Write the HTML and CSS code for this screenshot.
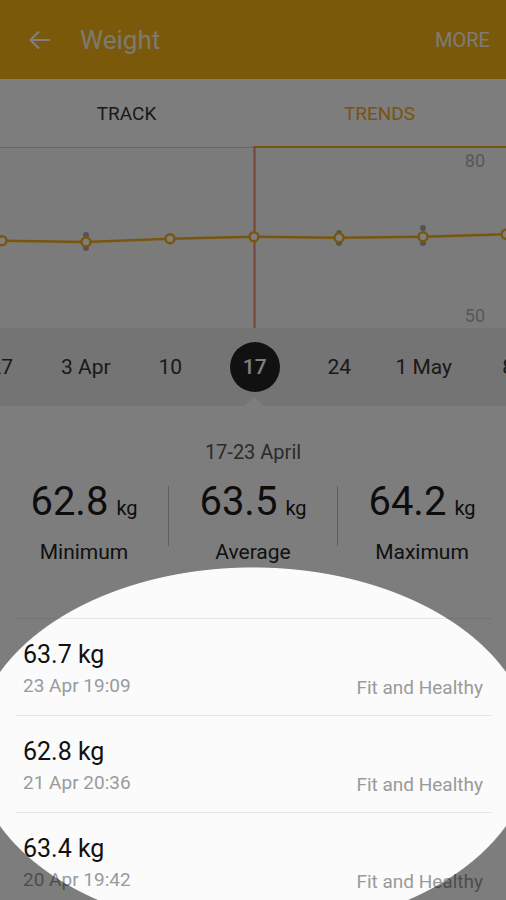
FILE: index.html
```html
<!DOCTYPE html>
<html lang="en">
  <head>
    <meta charset="UTF-8" />
    <meta name="viewport" content="width=device-width, initial-scale=1.0" />
    <title>Weight</title>
    <link rel="stylesheet" href="styles.css">
  </head>
  <body>
    <header class="appbar">
      <svg class="back" width="24" height="24" viewBox="0 0 24 24">
        <path d="M22 12H3M11 3.5L2.5 12 11 20.5" fill="none" stroke="#fff" stroke-width="2.2" />
      </svg>
      <h1>Weight</h1>
      <span class="more">MORE</span>
    </header>

    <nav class="tabs">
      <span class="tab">TRACK</span>
      <span class="tab active">TRENDS</span>
    </nav>

    <section class="chart">
      <svg width="506" height="182" viewBox="0 0 506 182">
        <line x1="0" y1="1.5" x2="254" y2="1.5" stroke="#cfcfcf" stroke-width="1" />
        <line x1="254" y1="1" x2="506" y2="1" stroke="#f2ad1d" stroke-width="2" />
        <line x1="254.5" y1="0" x2="254.5" y2="182" stroke="#ec8a74" stroke-width="2" />
        <text x="485" y="21" text-anchor="end" class="axis">80</text>
        <text x="485" y="176" text-anchor="end" class="axis">50</text>
        <g fill="#a8a8a8">
          <circle cx="86" cy="89" r="3" />
          <circle cx="86" cy="102" r="3" />
          <circle cx="339" cy="87" r="3" />
          <circle cx="339" cy="97" r="3" />
          <circle cx="423" cy="82" r="3" />
          <circle cx="423" cy="97" r="3" />
        </g>
        <polyline points="2,94.7 86,96 170,92.7 254,90.7 339,91.7 423,90.7 506,88.3"
          fill="none" stroke="#f2ad1d" stroke-width="2.5" />
        <g fill="#fff" stroke="#f2ad1d" stroke-width="2.5">
          <circle cx="2" cy="94.7" r="4.5" />
          <circle cx="86" cy="96" r="4.5" />
          <circle cx="170" cy="92.7" r="4.5" />
          <circle cx="254" cy="90.7" r="4.5" />
          <circle cx="339" cy="91.7" r="4.5" />
          <circle cx="423" cy="90.7" r="4.5" />
          <circle cx="506" cy="88.3" r="4.5" />
        </g>
      </svg>
    </section>

    <div class="weeks">
      <span class="week">27</span>
      <span class="week">3 Apr</span>
      <span class="week">10</span>
      <span class="week current"><b>17</b></span>
      <span class="week">24</span>
      <span class="week">1 May</span>
      <span class="week">8</span>
    </div>

    <section class="summary">
      <div class="range">17-23 April</div>
      <div class="stats">
        <div class="stat">
          <div class="value">62.8<small>kg</small></div>
          <div class="label">Minimum</div>
        </div>
        <div class="divider"></div>
        <div class="stat">
          <div class="value">63.5<small>kg</small></div>
          <div class="label">Average</div>
        </div>
        <div class="divider"></div>
        <div class="stat">
          <div class="value">64.2<small>kg</small></div>
          <div class="label">Maximum</div>
        </div>
      </div>
    </section>

    <ul class="entries">
      <li class="entry">
        <div class="weight">63.7 kg</div>
        <div class="meta"><span class="date">23 Apr 19:09</span><span class="status">Fit and Healthy</span></div>
      </li>
      <li class="entry">
        <div class="weight">62.8 kg</div>
        <div class="meta"><span class="date">21 Apr 20:36</span><span class="status">Fit and Healthy</span></div>
      </li>
      <li class="entry">
        <div class="weight">63.4 kg</div>
        <div class="meta"><span class="date">20 Apr 19:42</span><span class="status">Fit and Healthy</span></div>
      </li>
    </ul>

    <div class="spotlight"></div>
  </body>
</html>
```

FILE: styles.css
```css
body {
  margin: 0;
  width: 506px;
  height: 900px;
  overflow: hidden;
  font-family: Roboto, "Noto Sans", Arial, sans-serif;
  background-color: #fbfbfb;
  color: #222;
}

.appbar {
  height: 79px;
  background-color: #f4b316;
  display: flex;
  align-items: center;
  padding: 0 16px 0 28px;
  color: #fff;
}

.back {
  margin-right: 28px;
}

.appbar h1 {
  margin: 0;
  font-size: 26px;
  font-weight: 400;
  flex: 1;
  opacity: 0.85;
}

.more {
  font-size: 20px;
  opacity: 0.9;
}

.tabs {
  height: 67px;
  display: grid;
  grid-template-columns: 1fr 1fr;
  align-items: center;
  background-color: #fafafa;
}

.tab {
  text-align: center;
  font-size: 19px;
  color: #333;
  padding-top: 2px;
}

.tab.active {
  color: #f0a81a;
}

.chart {
  height: 182px;
  background-color: #f7f7f7;
}

.chart svg {
  display: block;
}

.axis {
  font-family: Roboto, Arial, sans-serif;
  font-size: 18px;
  fill: #b0b0b0;
}

.weeks {
  position: relative;
  height: 78px;
  background-color: #e9e9e9;
  display: flex;
  align-items: center;
  margin-left: -41px;
}

.weeks::after {
  content: "";
  position: absolute;
  left: 285px;
  bottom: 0;
  border-left: 10px solid transparent;
  border-right: 10px solid transparent;
  border-bottom: 9px solid #fbfbfb;
}

.week {
  flex: 0 0 84.5px;
  text-align: center;
  font-size: 21px;
  color: #333;
}

.week b {
  display: inline-flex;
  width: 50px;
  height: 50px;
  border-radius: 50%;
  background-color: #222;
  color: #fff;
  font-weight: 500;
  align-items: center;
  justify-content: center;
}

.summary {
  padding-top: 34px;
  text-align: center;
}

.range {
  font-size: 20px;
  line-height: 24px;
  color: #555;
}

.stats {
  display: grid;
  grid-template-columns: 1fr 1px 1fr 1px 1fr;
  margin-top: 14px;
}

.divider {
  height: 60px;
  margin-top: 8px;
  background-color: #bdbdbd;
}

.value {
  font-size: 40px;
  line-height: 48px;
  color: #1a1a1a;
}

.value small {
  font-size: 20px;
  margin-left: 8px;
}

.label {
  margin-top: 8px;
  font-size: 21px;
  line-height: 24px;
  color: #222;
}

.entries {
  list-style: none;
  margin: 54px 14px 0 16px;
  padding: 0;
}

.entry {
  border-top: 1px solid #e6e6e6;
  height: 97px;
  padding: 22px 9px 0 7px;
  box-sizing: border-box;
}

.weight {
  font-size: 25px;
  line-height: 28px;
  color: #111;
}

.meta {
  display: flex;
  justify-content: space-between;
  align-items: baseline;
  margin-top: 5px;
}

.date {
  font-size: 19px;
  color: #9a9a9a;
}

.status {
  font-size: 19px;
  color: #9a9a9a;
  position: relative;
  top: 2px;
}

.spotlight {
  position: fixed;
  left: 0;
  top: 0;
  width: 506px;
  height: 900px;
  pointer-events: none;
  background: radial-gradient(280px 182px at 253px 749px, transparent 99.5%, rgba(0, 0, 0, 0.5) 100%);
}
```
